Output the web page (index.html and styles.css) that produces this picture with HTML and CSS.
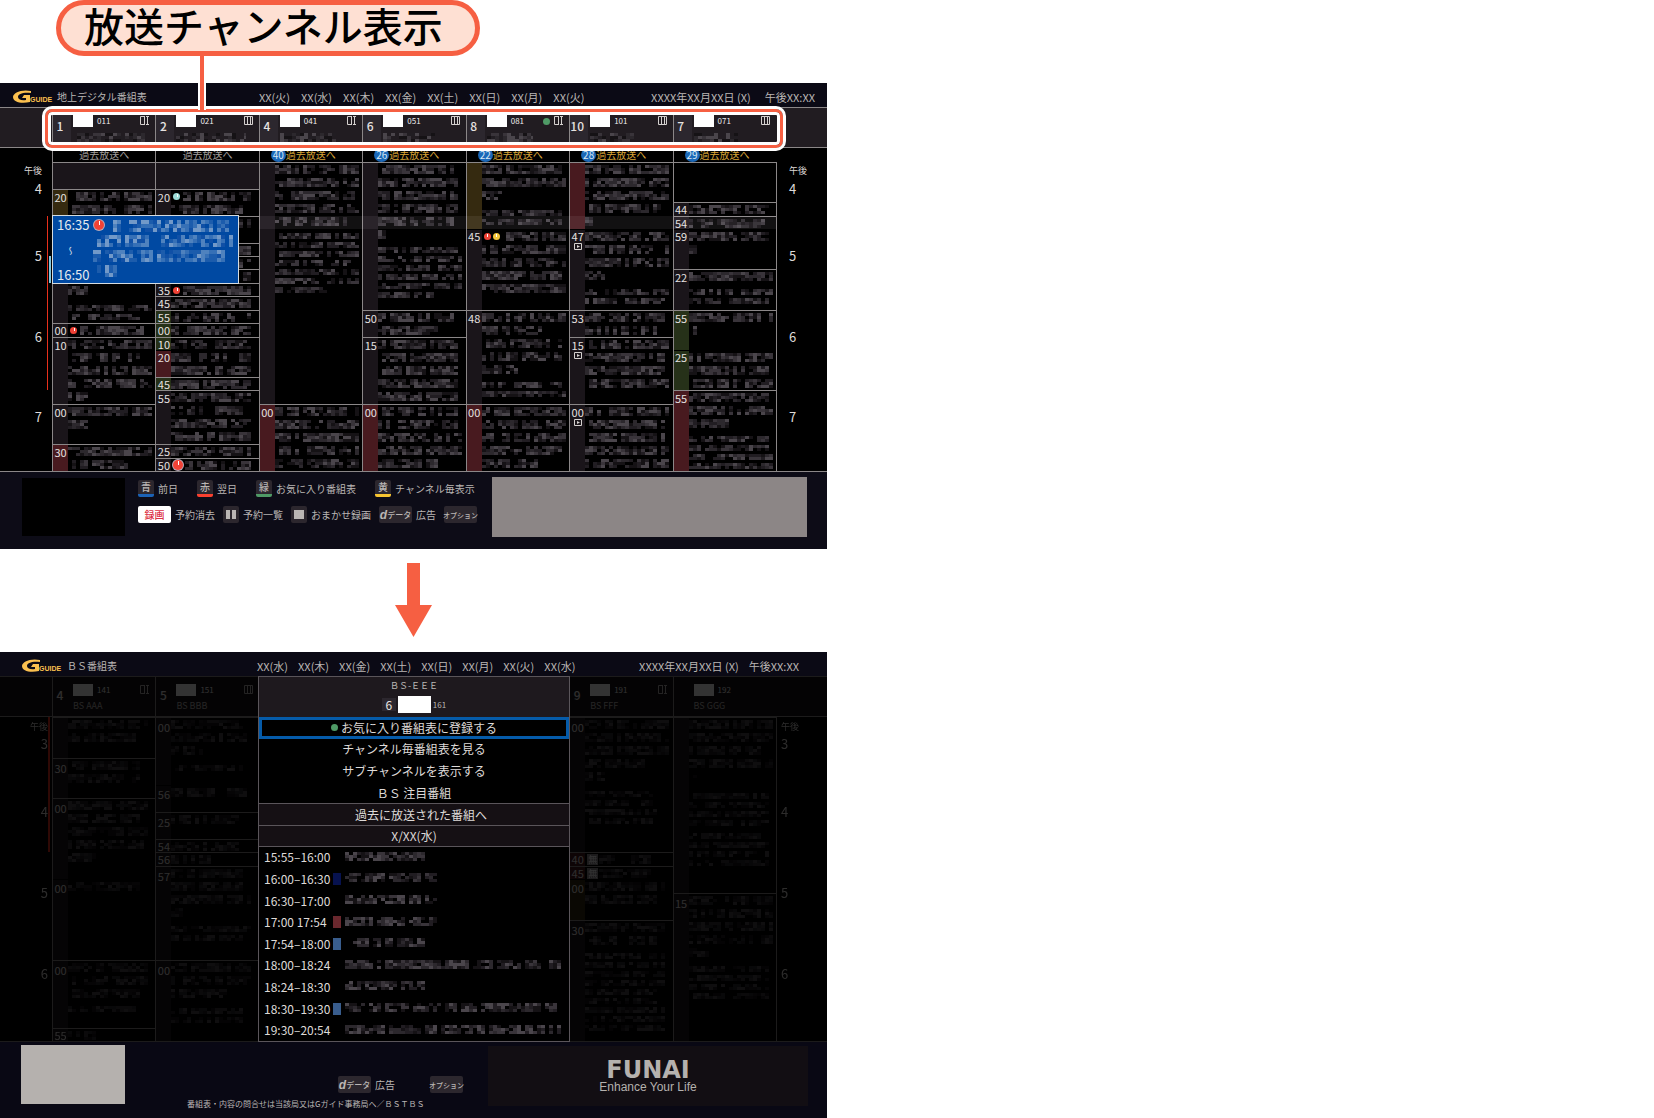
FILE: index.html
```html
<!DOCTYPE html>
<html lang="ja">
  <head>
    <meta charset="UTF-8" />
    <meta name="viewport" content="width=device-width, initial-scale=1.0" />
    <title>放送チャンネル表示</title>
    <link rel="stylesheet" href="styles.css">
  </head>
  <body>
    <main class="figure">
      <div class="callout">放送チャンネル表示</div>

      <!-- Terrestrial guide -->
      <section class="screen">
        <header class="topbar">
          <svg class="logo" viewBox="0 0 36 16">
            <path d="M18 2C8 0 0 4 0 8c0 5 8 7 17 5V6h-6l-2 3h4v2C8 12 5 10 5 8c0-3 5-5 13-4z" />
            <text x="17" y="13">GUIDE</text>
          </svg>
          <h1 class="title">地上デジタル番組表</h1>
          <nav class="days">
            <span>XX(火)</span><span>XX(水)</span><span>XX(木)</span><span>XX(金)</span>
            <span>XX(土)</span><span>XX(日)</span><span>XX(月)</span><span>XX(火)</span>
          </nav>
          <div class="clock"><span>XXXX年XX月XX日 (X)</span><span>午後XX:XX</span></div>
        </header>
        <div class="guide">
          <div class="channels">
            <div class="row" id="channels1"></div>
            <div class="highlight"></div>
          </div>
          <div class="row past" id="past1"></div>
          <div class="row programs" id="programs1"></div>
          <div class="popup">
            <div class="popup-time"><span>16:35</span><span class="wave">〜</span><span>16:50</span></div>
            <i class="mark red big"></i>
            <div class="popup-text" id="popupText"></div>
          </div>
          <div class="band"></div>
        </div>
        <footer class="bottombar">
          <div class="thumb"></div>
          <div class="keys">
            <div class="keyrow wide">
              <span class="item"><button class="key blue">青</button>前日</span>
              <span class="item"><button class="key redkey">赤</button>翌日</span>
              <span class="item"><button class="key green">緑</button>お気に入り番組表</span>
              <span class="item"><button class="key yellow">黄</button>チャンネル毎表示</span>
            </div>
            <div class="keyrow">
              <span class="item"><button class="key long rec">録画</button>予約消去</span>
              <span class="item"><button class="key" aria-label="予約一覧"><svg viewBox="0 0 16 17"><path d="M3 4h4v9H3zM9 4h4v9H9z" /></svg></button>予約一覧</span>
              <span class="item"><button class="key" aria-label="おまかせ録画"><svg viewBox="0 0 16 17"><path d="M3 4h10v9H3z" /></svg></button>おまかせ録画</span>
              <span class="item"><button class="key long small"><b>d</b>データ</button>広告</span>
              <button class="key long option">オプション</button>
            </div>
          </div>
          <div class="banner"></div>
        </footer>
      </section>

      <svg class="arrow" viewBox="0 0 37 74"><path d="M12 0h13v42h12L18.500 74 0 42h12z" /></svg>

      <!-- BS guide with the channel menu open -->
      <section class="screen bs">
        <header class="topbar">
          <svg class="logo" viewBox="0 0 36 16">
            <path d="M18 2C8 0 0 4 0 8c0 5 8 7 17 5V6h-6l-2 3h4v2C8 12 5 10 5 8c0-3 5-5 13-4z" />
            <text x="17" y="13">GUIDE</text>
          </svg>
          <h1 class="title">ＢＳ番組表</h1>
          <nav class="days">
            <span>XX(水)</span><span>XX(木)</span><span>XX(金)</span><span>XX(土)</span>
            <span>XX(日)</span><span>XX(月)</span><span>XX(火)</span><span>XX(水)</span>
          </nav>
          <div class="clock"><span>XXXX年XX月XX日 (X)</span><span>午後XX:XX</span></div>
        </header>
        <div class="guide">
          <div class="dim">
            <div class="channels"><div class="row" id="channels2"></div></div>
            <div class="row programs" id="programs2"></div>
          </div>
          <div class="menu">
            <div class="menu-head">
              <div class="menu-name">ＢＳ-ＥＥＥ</div>
              <div class="menu-ch"><span class="chip">6</span><span class="station"></span><span>161</span></div>
            </div>
            <div class="menu-list">
              <button class="selected"><i class="dot"></i>お気に入り番組表に登録する</button>
              <button>チャンネル毎番組表を見る</button>
              <button>サブチャンネルを表示する</button>
              <button>ＢＳ 注目番組</button>
              <button class="bar">過去に放送された番組へ</button>
              <div class="bar">X/XX(水)</div>
              <div class="old"><time>15:55–16:00</time><i></i><span data-text="T80"></span></div>
              <div class="old"><time>16:00–16:30</time><i class="navy"></i><span data-text="T92"></span></div>
              <div class="old"><time>16:30–17:00</time><i></i><span data-text="T92"></span></div>
              <div class="old"><time>17:00 17:54</time><i class="maroon"></i><span data-text="T92"></span></div>
              <div class="old"><time>17:54–18:00</time><i class="steel"></i><span data-text="T80"></span></div>
              <div class="old"><time>18:00–18:24</time><i></i><span data-text="T216"></span></div>
              <div class="old"><time>18:24–18:30</time><i></i><span data-text="T80"></span></div>
              <div class="old"><time>18:30–19:30</time><i class="steel"></i><span data-text="T212"></span></div>
              <div class="old"><time>19:30–20:54</time><i></i><span data-text="T216"></span></div>
            </div>
          </div>
        </div>
        <footer class="bottombar">
          <div class="thumb"></div>
          <div class="keys">
            <div class="keyrow">
              <span class="item"><button class="key long small"><b>d</b>データ</button>広告</span>
              <button class="key long option">オプション</button>
            </div>
            <p class="note">番組表・内容の問合せは当該局又はGガイド事務局へ／ＢＳＴＢＳ</p>
          </div>
          <div class="banner"><strong>FUNAI</strong><span>Enhance Your Life</span></div>
        </footer>
      </section>
    </main>
    <script src="script.js"></script>
  </body>
</html>
```

FILE: styles.css
```css
* {
  box-sizing: border-box;
}
body {
  margin: 0;
  background-color: #fff;
  font-family: "Noto Sans CJK JP", "Noto Sans", sans-serif;
}
button {
  font: inherit;
  color: inherit;
  background: none;
  border: 0;
  padding: 0;
}
.figure {
  width: 50%;
  display: flex;
  flex-direction: column;
}
/* callout with its leader line */
.callout {
  position: relative;
  z-index: 5;
  align-self: flex-start;
  margin: 0 0 27px 56px;
  padding: 0 32px 6px 23px;
  border: 5px solid #f65f42;
  border-radius: 28px;
  background-color: #fee0d3;
  color: #000;
  font-size: 40px;
  font-weight: 500;
  line-height: 40px;
  white-space: nowrap;
}
.callout::after {
  content: "";
  position: absolute;
  top: calc(100% + 5px);
  left: 137px;
  width: 4px;
  height: 54px;
  border: solid #fff;
  border-width: 0 2px;
  background-color: #f65f42;
}
.arrow {
  width: 37px;
  height: 74px;
  margin: 14px auto 15px;
  fill: #f65f42;
}
.screen {
  background-color: #000;
  color: #bab6b4;
}
.topbar {
  display: grid;
  grid-template-columns: 44px 202px 1fr auto;
  align-items: center;
  height: 24px;
  padding: 3px 12px 0 13px;
  background-color: #0b0a15;
  font-size: 11px;
  line-height: 16px;
  white-space: nowrap;
}
.bs .topbar {
  grid-template-columns: 45px 190px 1fr auto;
  padding: 4px 28px 0 22px;
}
.logo {
  width: 36px;
  height: 16px;
  fill: #fbc04f;
  overflow: visible;
}
.logo text {
  font: bold 7px "Liberation Sans", sans-serif;
}
.title {
  margin: 0;
  font-size: 10px;
  font-weight: 400;
  line-height: 16px;
}
.days {
  display: flex;
  gap: 11px;
}
.bs .days {
  gap: 10px;
}
.clock {
  display: flex;
  gap: 14px;
}
.bs .clock {
  gap: 10px;
}

/* guide table */
.guide {
  position: relative;
}
.row {
  display: grid;
  grid-template-columns: 52px repeat(7, 1fr) 51px;
}
.channels {
  position: relative;
  border: solid #8b8788;
  border-width: 1px 0;
}
.channels .row {
  height: 39px;
  background-color: #211c21;
}
.channel {
  display: grid;
  grid-template-columns: 18px 1fr;
  border-left: 1px solid #8b8788;
}
.channel .num {
  display: flex;
  align-items: center;
  padding: 0 4px 5px 0;
  background-color: #2c272e;
  color: #e6e2e0;
  font-size: 12px;
  font-weight: 500;
  justify-content: center;
}
.channel .info {
  display: grid;
  grid-template-columns: 20px 1fr auto auto;
  gap: 4px;
  align-content: start;
  padding: 7px 6px 0 2px;
}
.channel .station {
  height: 12px;
  background-color: #fff;
}
.channel .id {
  color: #f0eeee;
  font-size: 8px;
  line-height: 11px;
}
.channel .name {
  grid-column: 1 / -1;
  font-size: 9px;
  line-height: 12px;
}
.layout {
  width: 9px;
  height: 11px;
  fill: none;
  stroke: #d5d1cf;
}
.dot {
  width: 7px;
  height: 7px;
  border-radius: 50%;
  background-color: #4f9a66;
  align-self: center;
}
.highlight {
  position: absolute;
  z-index: 3;
  top: 1px;
  bottom: -1px;
  left: 45px;
  right: 44px;
  border: 3px solid #f65f42;
  border-radius: 7px;
  outline: 3px solid #fff;
  box-shadow: inset 0 0 0 3px #fff;
}
.past {
  height: 14px;
}
.past a {
  display: flex;
  align-items: center;
  justify-content: center;
  border-left: 1px solid #8b8788;
  color: #a19d9b;
  font-size: 10px;
  line-height: 14px;
  text-decoration: none;
}
.past a.gold {
  justify-content: flex-start;
  padding-left: 11px;
  color: #d9a436;
}
.past i {
  width: 15px;
  height: 14px;
  border-radius: 50%;
  background-color: #1b68b8;
  color: #d8e8f5;
  font-size: 10px;
  font-style: normal;
  text-align: center;
}
.programs {
  height: 310px;
  border-bottom: 1px solid #8b8788;
}
.bs .programs {
  height: 325px;
}
.hours,
.column {
  display: grid;
  grid-template-rows: repeat(23, 1fr);
  min-height: 0;
}
.bs .hours,
.bs .column {
  grid-template-rows: repeat(24, 1fr);
}
.column,
.hours.right {
  border-left: 1px solid #8b8788;
}
.hours {
  position: relative;
  grid-template-columns: 1fr 6px 4px;
  color: #dedad8;
  font-size: 13px;
  line-height: 16px;
  align-items: center;
  text-align: right;
}
.bs .hours {
  grid-template-columns: 1fr 2px 2px;
}
.hours.right {
  grid-template-columns: 1fr;
  padding-left: 12px;
  text-align: left;
}
.bs .hours.right {
  grid-template-columns: 1fr;
  padding-left: 4px;
}
.hours .ampm {
  font-size: 9px;
  line-height: 9px;
  align-self: end;
  white-space: nowrap;
}
.hours span {
  grid-column: 1;
}
.now {
  grid-column: 2;
  grid-row: 5 / 18;
  align-self: stretch;
  justify-self: end;
  width: 1px;
  background-color: #e8301c;
}
.bs .now {
  grid-row: 1 / 11;
  width: 2px;
}
.here {
  grid-column: 3;
  grid-row: 8 / 10;
  align-self: stretch;
  justify-self: center;
  width: 2px;
  background-color: #7fc6e0;
}
.bs .here {
  display: none;
}
.program {
  display: grid;
  grid-template-columns: 15px 1fr;
  min-height: 0;
  overflow: hidden;
  border-top: 1px solid #8b8788;
}
.program.joined {
  border-top-color: transparent;
}
.program.joined .start {
  margin-top: -1px;
}
.start {
  padding-top: 1px;
  background-color: #1a151a;
  color: #e6e2e0;
  font-size: 11px;
  line-height: 12px;
  text-align: center;
}
.bs .start {
  padding-top: 3px;
}
.program.single .start {
  padding-top: 0;
}
.program.olive .start {
  background-color: #352a10;
}
.program.red .start {
  background-color: #481a1f;
}
.program.green .start {
  background-color: #263119;
}
.program.blank {
  background-color: #1a151a;
}
.text {
  position: relative;
  min-width: 0;
  overflow: hidden;
}
.text .marks {
  position: absolute;
  top: 3px;
  left: 2px;
  display: flex;
  gap: 2px;
}
.single .text .marks {
  top: 1px;
}
.play {
  display: block;
  width: 8px;
  height: 7px;
  margin: 1px auto 0;
  fill: #d5d1cf;
  stroke: #d5d1cf;
}
.mosaic {
  display: block;
}
.mark {
  position: relative;
  width: 7px;
  height: 7px;
  border-radius: 50%;
  background-color: #f04236;
}
.mark::after {
  content: "";
  position: absolute;
  top: 1px;
  left: 50%;
  width: 1px;
  height: 40%;
  background-color: #fff;
}
.single .mark {
  margin-top: 2px;
}
.mark.yellow {
  background-color: #f3c63c;
}
.mark.cyan {
  background-color: #9cdcd8;
}
.mark.big {
  width: 10px;
  height: 10px;
  margin-top: 0;
  box-shadow: 0 0 0 1px #b9a9b8;
}
.badge {
  width: 11px;
  background-color: #8d858d;
  color: #fff;
  font-size: 9px;
  font-style: normal;
  line-height: 11px;
  text-align: center;
}
.band {
  position: absolute;
  top: 109px;
  left: 259px;
  right: 51px;
  height: 13px;
  background-color: rgba(255, 240, 250, 0.07);
}
.popup {
  position: absolute;
  z-index: 2;
  top: 108px;
  left: 52px;
  width: 187px;
  height: 69px;
  display: grid;
  grid-template-columns: 36px 14px 1fr;
  padding: 2px 5px 1px 4px;
  border: 1px solid #d5dce0;
  background-color: #0049a2;
}
.popup .mark {
  margin: 2px 0 0 1px;
}
.popup-time {
  display: flex;
  flex-direction: column;
  justify-content: space-between;
  color: #e4e9ee;
  font-size: 13px;
  line-height: 14px;
}
.popup-time .wave {
  align-self: flex-start;
  margin-left: 6px;
  font-size: 9px;
  writing-mode: vertical-rl;
}
.popup-text {
  margin-left: -14px;
}

/* bottom bar */
.bottombar {
  display: grid;
  grid-template-columns: 103px 1fr 315px;
  gap: 13px;
  height: 77px;
  padding: 5px 20px 0 22px;
  background-color: #0d0c17;
  font-size: 10px;
  line-height: 16px;
  white-space: nowrap;
}
.thumb {
  height: 58px;
  margin-top: 1px;
  background-color: #000;
}
.keys {
  display: flex;
  flex-direction: column;
  gap: 9px;
  padding-top: 3px;
}
.keyrow {
  display: flex;
  gap: 8px;
}
.keyrow.wide {
  gap: 19px;
}
.item {
  display: flex;
  align-items: center;
  gap: 4px;
}
.key {
  display: flex;
  align-items: center;
  justify-content: center;
  width: 16px;
  height: 17px;
  border-radius: 2px;
  background-color: #2c272e;
  font-weight: 500;
}
.key svg {
  width: 16px;
  height: 17px;
  fill: #bab6b4;
}
.key.long {
  width: 33px;
}
.key.small {
  font-size: 8px;
}
.key.option {
  font-size: 7px;
}
.key b {
  font: italic bold 12px "Liberation Sans", sans-serif;
}
.key.blue {
  border-bottom: 3px solid #1b62b5;
}
.key.redkey {
  border-bottom: 3px solid #f9402f;
}
.key.green {
  border-bottom: 3px solid #4f9a66;
}
.key.yellow {
  border-bottom: 3px solid #f7c531;
}
.key.rec {
  background-color: #fff;
  color: #dc2f45;
}
.banner {
  height: 60px;
  background-color: #8c8686;
}
.bs .bottombar {
  grid-template-columns: 104px 1fr 320px;
  height: 76px;
  padding: 3px 19px 0 21px;
  gap: 0;
  background-color: #090814;
}
.bs .thumb {
  height: 59px;
  margin-top: 0;
  background-color: #b5b1ae;
}
.bs .keys {
  gap: 3px;
  padding: 31px 0 0 62px;
}
.bs .keyrow {
  gap: 35px;
  padding-left: 151px;
}
.note {
  margin: 0;
  font-size: 8px;
  line-height: 15px;
}
.bs .banner {
  display: flex;
  flex-direction: column;
  align-items: center;
  margin-top: 1px;
  padding-top: 14px;
  background-color: #120e13;
  color: #b5b1ae;
}
.banner strong {
  font: bold 24px/20px "DejaVu Sans", sans-serif;
}
.banner span {
  font: 12px/15px "Liberation Sans", sans-serif;
}

/* guide behind the menu */
.dim {
  opacity: 0.2;
}
.dim .channels .row,
.dim .channel .num {
  background-color: #161318;
}
.dim .layout {
  stroke: #b5b1ae;
}

/* channel menu */
.menu {
  position: absolute;
  top: 0;
  bottom: 0;
  left: 258px;
  right: 257px;
  display: flex;
  flex-direction: column;
  border: 1px solid #5a555a;
  background-color: #000;
}
.menu-head {
  flex: none;
  height: 40px;
  padding-top: 2px;
  background-color: #1e191e;
  font-size: 9px;
  line-height: 13px;
  text-align: center;
}
.menu-ch {
  display: flex;
  align-items: center;
  justify-content: center;
  gap: 2px;
  padding-top: 4px;
  font-size: 8px;
}
.menu-ch .chip {
  width: 14px;
  background-color: #2c272e;
  color: #e6e2e0;
  font-size: 12px;
}
.menu-ch .station {
  width: 33px;
  height: 17px;
  background-color: #fff;
}
.menu-list {
  flex: 1;
  display: grid;
  grid-template-rows: repeat(15, minmax(0, 1fr));
  min-height: 0;
  color: #dedad8;
  font-size: 12px;
  line-height: 16px;
  white-space: nowrap;
}
.menu-list button,
.menu-list .bar {
  display: flex;
  align-items: center;
  justify-content: center;
  gap: 3px;
}
.menu-list .selected {
  border: 3px solid #055ba9;
}
.menu-list .bar {
  border-top: 1px solid #5a555a;
  background-color: #151014;
}
.menu-list button.bar {
  padding-left: 14px;
}
.menu-list div.bar {
  border-bottom: 1px solid #5a555a;
}
.old {
  display: grid;
  grid-template-columns: 65px 8px 1fr;
  gap: 0 4px;
  align-items: center;
  padding-left: 5px;
  min-height: 0;
}
.old i {
  width: 8px;
  height: 12px;
}
.navy {
  background-color: #07124f;
}
.maroon {
  background-color: #6a282e;
}
.steel {
  background-color: #395d8d;
}
```

FILE: script.js
```js
// [number, id, name (text or mosaic width), layout bars, favourite]
const channels1 = [
  ["1", "011", 72, 1], ["2", "021", 70, 2], ["4", "041", 56, 1], ["6", "051", 52, 2],
  ["8", "081", 46, 1, true], ["10", "101", 46, 2], ["7", "071", 46, 2],
];
const channels2 = [
  ["4", "141", "BS AAA", 1], ["5", "151", "BS BBB", 2], null, null, null,
  ["9", "191", "BS FFF", 1], ["", "192", "BS GGG", 0],
];
const past1 = ["", "", "40", "26", "22", "28", "29"];

// [slots, start, style, text lines, marks]
// text lines: T = title line, t = detail line, B = popup line, _ = gap; "12-70" is offset-width
const programs1 = [
  [
    [2, "", "blank", ""],
    [2, "20", "olive", "T8-76 T84"],
    [8, "", "", "_67 T20 _6 t84 t76"],
    [1, "00", "", "T12-72", "red"],
    [5, "10", "", "T84 T72 T84 T84 T20"],
    [3, "00", "", "T84 T20"],
    [2, "30", "red", "T84 T60"],
  ],
  [
    [2, "", "blank", ""],
    [2, "20", "", "T12-68 T72", "cyan"],
    [2, "", "", "T80"],
    [1, "", "", "T80"],
    [1, "", "", "T80"],
    [1, "", "", "T80"],
    [1, "35", "", "T12-68", "red"],
    [1, "45", "", "T80"],
    [1, "55", "green", "T80"],
    [1, "00", "green", "T80"],
    [1, "10", "green", "T80"],
    [2, "20", "red joined", "T80 T80"],
    [1, "45", "green", "T80"],
    [4, "55", "", "T80 T72 T80 T80"],
    [1, "25", "", "T80"],
    [1, "50", "", "T14-66", "red big"],
  ],
  [
    [18, "", "", "T84 T84 T80 T84 T76 _3 t84 t84 t84 t84 t84 t84 t52"],
    [5, "00", "red", "T84 T84 T84 T84 T84"],
  ],
  [
    [11, "", "", "T76 T80 T80 T80 T80 T8 _4 t84 t84 t84 t84 t84 t60"],
    [2, "50", "", "T80 T60"],
    [5, "15", "", "T80 T80 T80 T80 T80"],
    [5, "00", "red", "T80 T80 T84 T84 T60"],
  ],
  [
    [5, "", "olive", "T80 T84 T20 _6 t80 t80"],
    [6, "45", "joined", "T20-64 T84 T84 T80 T84", "red,yellow"],
    [7, "48", "", "T84 T60 T80 T80 T34 _4 t84 t84"],
    [5, "00", "red", "T84 T84 T84 T84 T56"],
  ],
  [
    [5, "", "red", "T84 T84 T84 T76 T8"],
    [6, "47", "joined video", "T84 T84 T84 T20 _5 t84 t84"],
    [2, "53", "", "T80 T72"],
    [5, "15", "video", "T84 T80 T80 T84"],
    [5, "00", "video", "T84 T84 T80 T84 T84"],
  ],
  [
    [3, "", "empty", ""],
    [1, "44", "", "T80"],
    [1, "54", "", "T80"],
    [3, "59", "joined", "T84 T8"],
    [3, "22", "", "T84 _4 t84 t80"],
    [3, "55", "green", "T84 T8"],
    [3, "25", "green joined", "T84 T80 T84"],
    [6, "55", "red", "T84 T84 T40 _4 t84 t84 t84 t84"],
  ],
];
const programs2 = [
  [
    [3, "", "", "T80 T68"],
    [3, "30", "", "T76 T72"],
    [6, "00", "", "T80 T72 T80 T76 T28"],
    [6, "00", "joined", "T72"],
    [5, "00", "", "T80 T80 T72 _4 t70"],
    [1, "55", "", "T28"],
  ],
  [
    [5, "00", "", "T72 T76 T32 _6 t72"],
    [2, "56", "joined", "T76"],
    [2, "25", "", "T68"],
    [1, "54", "", "T68"],
    [1, "56", "", "T40"],
    [7, "57", "", "T80 T72 T80 T12 _5 t80 t76"],
    [6, "00", "", "T80 T80 T56 _6 t72 t72"],
  ],
  [], [], [],
  [
    [10, "00", "", "T84 T84 T84 T60 T20 _6 t68 t76 t76 t68"],
    [1, "40", "red", "T14-52", "badge"],
    [1, "45", "red", "T14-52", "badge"],
    [3, "00", "olive joined", "T84 T72"],
    [9, "30", "", "T84 T72 _4 t80 t80 t80 t80 t80 t80 t80 t80 t80"],
  ],
  [
    [13, "", "", "T84 T84 T70 T84 T8 _8 t80 t80 t80 t80 _4 t70 t80 t80 t80"],
    [11, "15", "", "T84 T84 T84 T84 T20 _5 t80 t80 t80 t80"],
  ],
];

let seed = 7;
function random() {
  seed = (seed * 16807) % 2147483647;
  return seed / 2147483647;
}

// [rows, block height, line step]
const lineKinds = { T: [3, 3, 13], t: [2, 3, 9], B: [3, 4, 15] };

// Draws lines of blocks, one path for each shade
function mosaic(lines, shades) {
  const paths = shades.map(() => "");
  let y = 2;
  let width = 0;
  lines.split(" ").filter(Boolean).forEach((line) => {
    const nums = line.slice(1).split("-").map(Number);
    if (line[0] === "_") {
      y += nums[0];
      return;
    }
    const [rows, height, step] = lineKinds[line[0]];
    const start = nums.length > 1 ? nums[0] : 0;
    const end = start + nums[nums.length - 1];
    for (let x = start; x < end; x += 4) {
      const gap = random() < 0.12;
      for (let r = 0; r < rows; r++) {
        const level = Math.floor(random() * (shades.length + 1)) - 1;
        if (!gap && level >= 0) {
          paths[level] += `M${x} ${y + r * height}h4v${height}h-4z`;
        }
      }
    }
    width = Math.max(width, end);
    y += step;
  });
  const body = paths.map((d, i) => `<path fill="${shades[i]}" d="${d}"/>`).join("");
  return `<svg class="mosaic" width="${width}" height="${y}" shape-rendering="crispEdges">${body}</svg>`;
}

const grays = ["#151215", "#211d22", "#2c282d", "#39343a", "#4a454b"];
const blues = ["#1050a6", "#1c5cac", "#3670b6", "#4f82be", "#7299c8"];

function layoutIcon(bars) {
  if (!bars) return "<span></span>";
  const right = bars === 1
    ? "M4 1.500H.500v8H4M4.500 1v9M6 1.500h3M7.500 1v9M6 9.500h3"
    : "M.500 1.500h8v8h-8zM3.500 1v9M6.500 1v9";
  return `<svg class="layout" viewBox="0 0 9 11"><path d="${right}"/></svg>`;
}

function drawChannels(id, list) {
  document.getElementById(id).innerHTML = "<span></span>" + list.map((c) => {
    if (!c) return '<div class="channel"></div>';
    const name = typeof c[2] === "number" ? mosaic("T" + c[2], grays) : c[2];
    return `<div class="channel"><div class="num">${c[0]}</div><div class="info">
      <span class="station"></span><span class="id">${c[1]}</span>
      ${c[4] ? '<i class="dot"></i>' : "<span></span>"}${layoutIcon(c[3])}
      <div class="name">${name}</div></div></div>`;
  }).join("");
}

function drawHours(first, side) {
  const labels = [0, 1, 2, 3].map((i) => {
    const row = [2, 7, 13, 19][i];
    return `<span style="grid-row:${row} / span 2">${first + i}</span>`;
  }).join("");
  const lines = side ? "" : '<i class="now"></i><i class="here"></i>';
  return `<div class="hours ${side}"><span class="ampm">午後</span>${labels}${lines}</div>`;
}

function drawPrograms(id, columns, first) {
  const play = '<svg class="play" viewBox="0 0 8 7"><path fill="none" d="M.5.500h7v6h-7z"/><path stroke="none" d="M3 2l3 1.500L3 5z"/></svg>';
  const html = columns.map((column) => {
    const cells = column.map(([slots, start, style, lines, marks]) => {
      const icons = (marks || "").split(",").filter(Boolean).map((m) =>
        m === "badge" ? '<i class="badge">無</i>' : `<i class="mark ${m}"></i>`).join("");
      const inner = style === "blank" || style === "empty" ? "" :
        `<div class="start">${start}${style.includes("video") ? play : ""}</div>
         <div class="text">${mosaic(lines, grays)}<div class="marks">${icons}</div></div>`;
      const single = slots === 1 ? "single" : "";
      return `<div class="program ${style} ${single}" style="grid-row:span ${slots}">${inner}</div>`;
    }).join("");
    return `<div class="column">${cells}</div>`;
  }).join("");
  document.getElementById(id).innerHTML = drawHours(first, "") + html + drawHours(first, "right");
}

drawChannels("channels1", channels1);
drawChannels("channels2", channels2);
drawPrograms("programs1", programs1, 4);
drawPrograms("programs2", programs2, 3);
document.getElementById("past1").innerHTML = "<span></span>" + past1.map((n) =>
  n ? `<a class="gold" href="#"><i>${n}</i>過去放送へ</a>` : '<a href="#">過去放送へ</a>').join("");
document.getElementById("popupText").innerHTML = mosaic("B20-120 B140 B132 B24", blues);
document.querySelectorAll("[data-text]").forEach((el) => {
  el.innerHTML = mosaic(el.dataset.text, grays);
});
```
